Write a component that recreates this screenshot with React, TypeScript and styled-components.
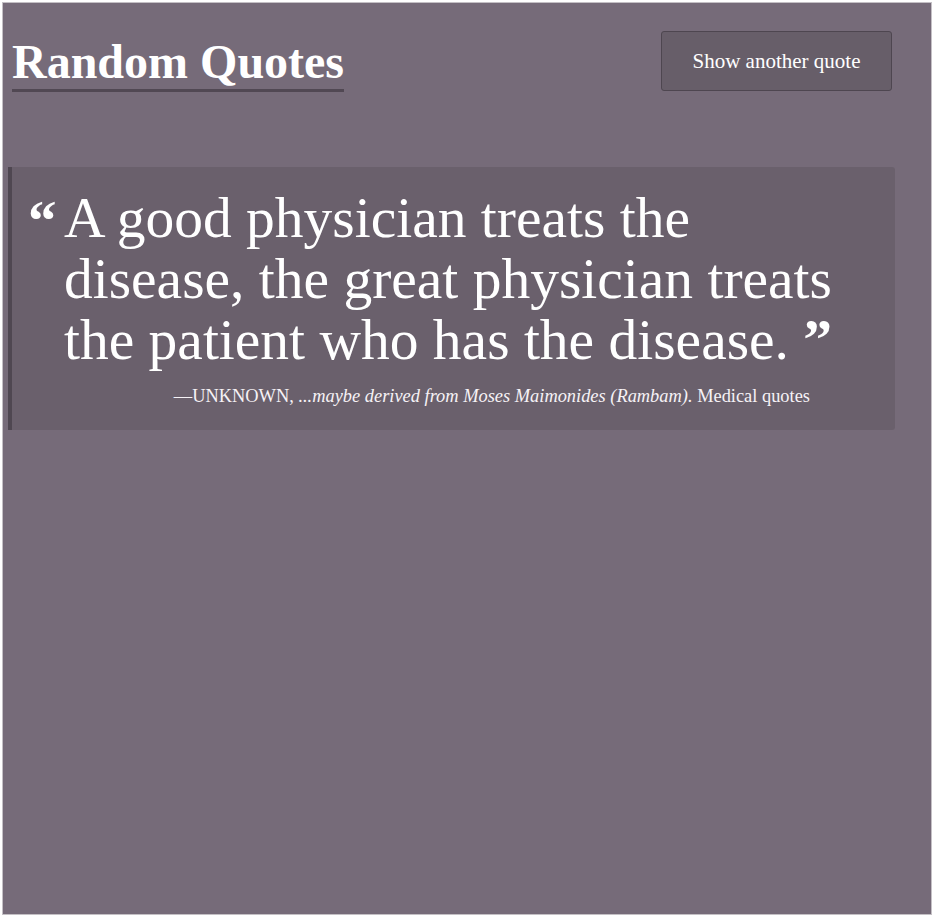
import { FC } from "react";
import styled, { createGlobalStyle } from "styled-components";

const GlobalStyle = createGlobalStyle`
  html, body {
    margin: 0;
    background: #ffffff;
  }
  body {
    padding: 2px;
    font-family: "Liberation Serif", "Times New Roman", serif;
  }
`;

const Page = styled.div`
  box-sizing: border-box;
  width: 930px;
  height: 913px;
  border: 1px solid #c4c0c5;
  background: #766b79;
  padding: 0 36px 0 5px;
  color: #ffffff;
`;

const Header = styled.header`
  display: flex;
  justify-content: space-between;
  align-items: flex-start;
  padding: 0 3px 0 4px;
`;

const Title = styled.h1`
  margin: 33px 0 0;
  font-size: 48px;
  font-weight: 700;
  line-height: 1.1;
  border-bottom: 3px solid #514853;
  color: #ffffff;
`;

const NewQuoteButton = styled.button`
  margin-top: 28px;
  width: 231px;
  height: 60px;
  background: #675e69;
  border: 1px solid #4e4650;
  border-radius: 3px;
  color: #ffffff;
  font-family: inherit;
  font-size: 21px;
  cursor: pointer;
`;

const QuoteCard = styled.blockquote`
  display: flex;
  margin: 75px 0 0;
  padding: 20px 30px 23px 16px;
  background: #6a606c;
  border-left: 4px solid #4f4751;
  border-radius: 0 3px 3px 0;
`;

const OpenMark = styled.span`
  flex: none;
  width: 36px;
  font-size: 57px;
  font-weight: 700;
  line-height: 1;
  margin-top: 5px;
`;

const Body = styled.div`
  flex: 1;
`;

const QuoteText = styled.p`
  margin: 0;
  font-size: 57.5px;
  line-height: 61px;
`;

const CloseMark = styled.span`
  font-weight: 700;
`;

const Attribution = styled.footer`
  margin-top: 15px;
  padding-right: 55px;
  text-align: right;
  font-size: 18.4px;
  line-height: 1.2;
  color: #f6f2f6;
`;

const Source = styled.cite`
  font-style: italic;
`;

const App: FC = () => {
  return (
    <>
      <GlobalStyle />
      <Page>
        <Header>
          <Title>Random Quotes</Title>
          <NewQuoteButton>Show another quote</NewQuoteButton>
        </Header>
        <QuoteCard>
          <OpenMark>“</OpenMark>
          <Body>
            <QuoteText>
              A good physician treats the disease, the great physician treats
              the patient who has the disease.&nbsp;<CloseMark>”</CloseMark>
            </QuoteText>
            <Attribution>
              —UNKNOWN, <Source>...maybe derived from Moses Maimonides (Rambam).</Source>{" "}
              Medical quotes
            </Attribution>
          </Body>
        </QuoteCard>
      </Page>
    </>
  );
};

export default App;
